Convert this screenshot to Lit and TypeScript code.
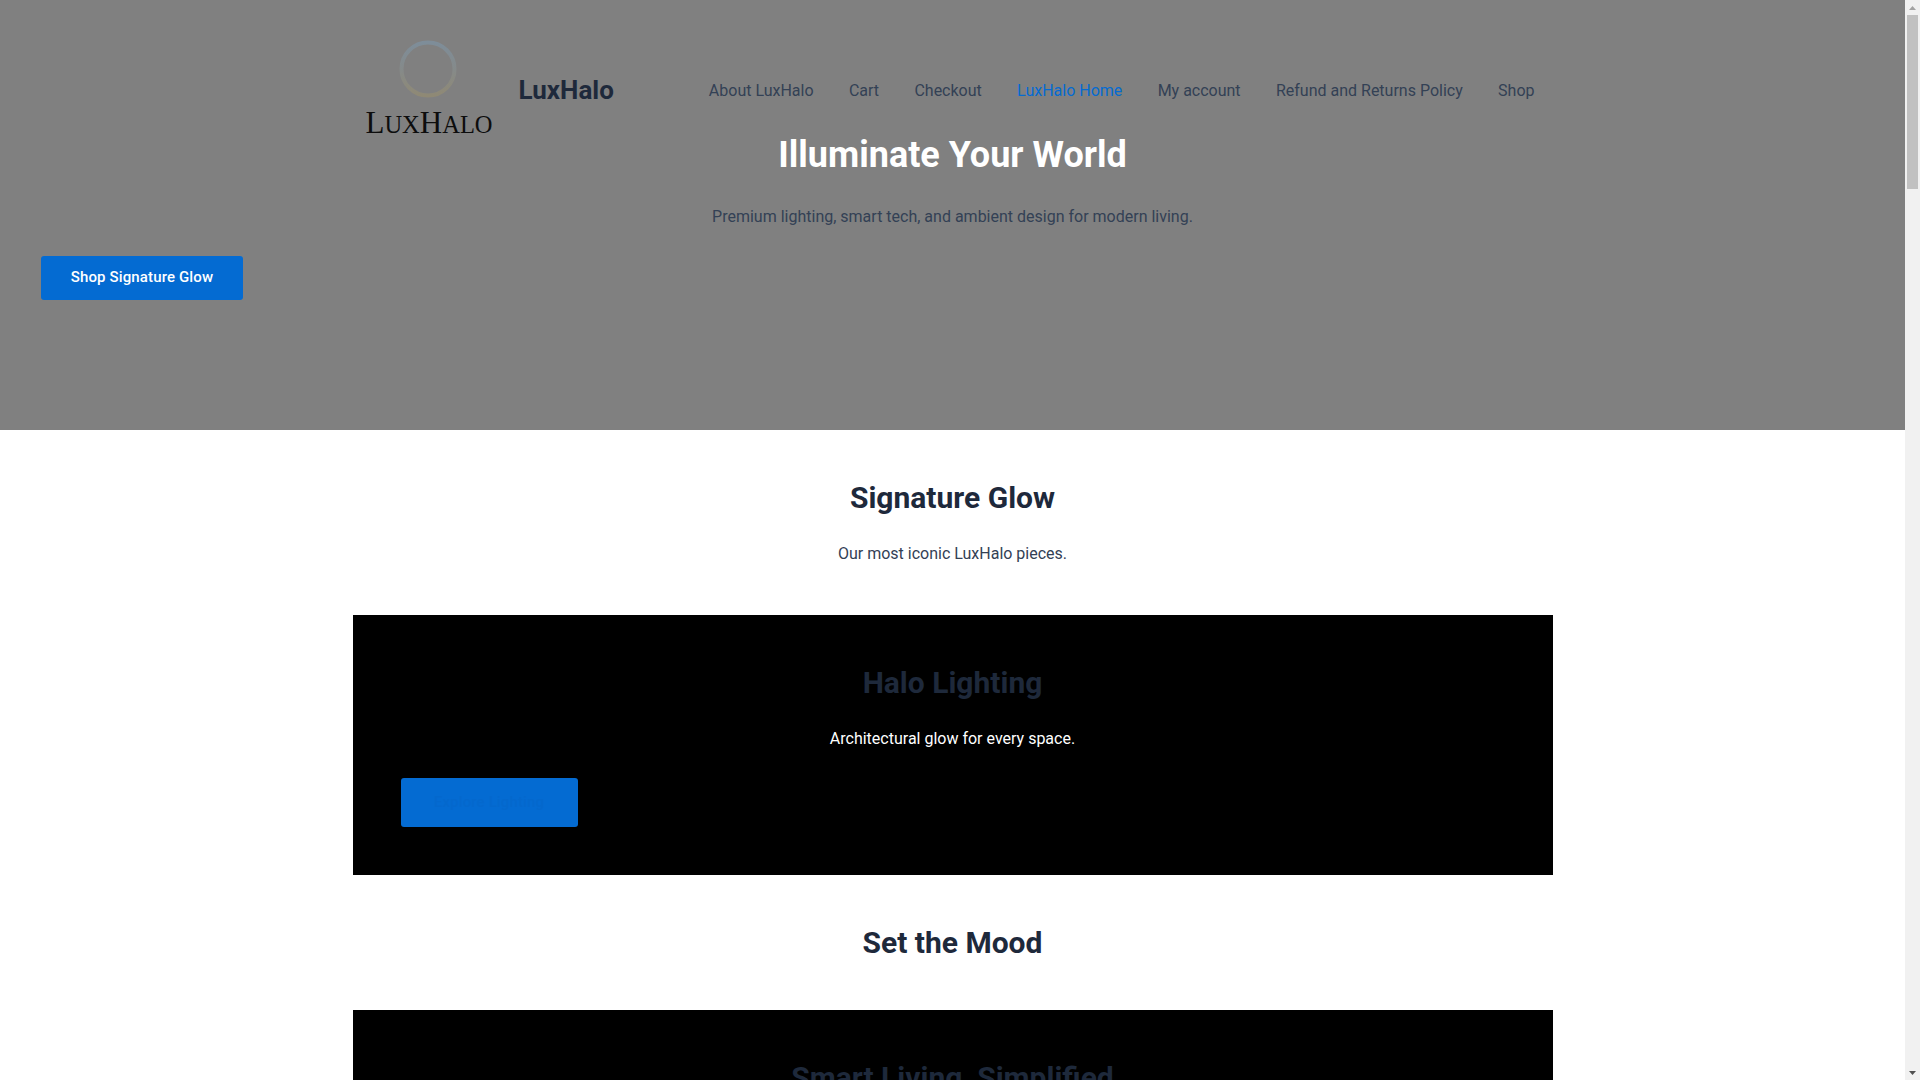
import { LitElement, html, css } from 'lit';
import { customElement } from 'lit/decorators.js';

const NAV = [
  { label: 'About LuxHalo' },
  { label: 'Cart' },
  { label: 'Checkout' },
  { label: 'LuxHalo Home', current: true },
  { label: 'My account' },
  { label: 'Refund and Returns Policy' },
  { label: 'Shop' },
];

@customElement('app-root')
export class AppRoot extends LitElement {
  static styles = css`
    :host {
      display: flex;
      height: 100vh;
      overflow: hidden;
      background: #fff;
      font-family: Roboto, 'Liberation Sans', sans-serif;
      font-size: 16px;
      color: #334155;
    }

    .page {
      flex: 1;
      min-width: 0;
      overflow: hidden;
    }

    .hero {
      height: 430px;
      background: #808080;
      overflow: hidden;
    }

    .header {
      width: 1200px;
      height: 150px;
      margin: 0 auto;
      padding: 30px 18px 0 13px;
      box-sizing: border-box;
      display: flex;
      align-items: center;
      justify-content: space-between;
    }

    .brand {
      display: flex;
      align-items: center;
      gap: 26px;
    }

    .logo {
      width: 127px;
      height: 102px;
      margin-top: 2px;
      display: flex;
      flex-direction: column;
      align-items: center;
    }

    .logo svg {
      flex: none;
      display: block;
      margin-left: -2px;
    }

    .logo-word {
      font-family: 'Liberation Serif', serif;
      font-size: 31px;
      line-height: 34px;
      color: #0d0d0d;
      white-space: nowrap;
      margin-top: 8px;
    }

    .logo-word small {
      font-size: 24.5px;
    }

    .site-title {
      font-size: 26px;
      font-weight: 700;
      color: #1e293b;
      line-height: 1;
    }

    nav {
      display: flex;
      gap: 35.33px;
      line-height: 24px;
      padding-top: 1px;
    }

    nav a {
      color: #334155;
      text-decoration: none;
    }

    nav a.current {
      color: #046bd2;
    }

    .hero-copy {
      text-align: center;
      margin-top: -18px;
    }

    .hero-copy h1 {
      margin: 0;
      font-size: 36px;
      line-height: 46px;
      font-weight: 700;
      color: #fff;
    }

    .hero-copy p {
      margin: 26px 0 0;
      line-height: 26px;
    }

    .hero-action {
      padding: 26px 0 0 41px;
    }

    .btn {
      display: inline-block;
      box-sizing: border-box;
      background: #046bd2;
      border-radius: 3px;
      font-weight: 500;
      font-size: 15px;
      letter-spacing: 0.14px;
      text-align: center;
      text-decoration: none;
    }

    .btn.hero-btn {
      width: 202px;
      height: 44px;
      line-height: 42px;
      color: #fff;
    }

    .content {
      width: 1200px;
      margin: 0 auto;
      text-align: center;
    }

    h2 {
      margin: 0;
      font-size: 30px;
      line-height: 39px;
      font-weight: 700;
      color: #1e293b;
    }

    .section-head {
      padding-top: 48px;
    }

    .section-head p {
      margin: 24px 0 0;
      line-height: 26px;
    }

    .card {
      background: #000;
      margin-top: 48px;
      padding-top: 48px;
    }

    .card p {
      margin: 24px 0 0;
      line-height: 26px;
      color: #fff;
    }

    .card-action {
      text-align: left;
      padding: 26px 0 48px 48px;
    }

    .btn.card-btn {
      width: 177px;
      height: 49px;
      line-height: 49px;
      color: #0468cd;
    }

    .scrollbar {
      flex: none;
      width: 15px;
      background: #f1f1f1;
      display: flex;
      flex-direction: column;
      align-items: center;
    }

    .arrow {
      flex: none;
      width: 15px;
      height: 15px;
      display: flex;
      align-items: center;
      justify-content: center;
    }

    .thumb {
      flex: none;
      width: 11px;
      height: 174px;
      background: #c1c1c1;
    }

    .spacer {
      flex: 1;
    }
  `;

  render() {
    return html`
      <div class="page">
        <section class="hero">
          <header class="header">
            <div class="brand">
              <div class="logo">
                <svg width="58" height="58" viewBox="0 0 58 58">
                  <defs>
                    <linearGradient id="halo" x1="0" y1="0" x2="0" y2="1">
                      <stop offset="0" stop-color="#7e8d99"></stop>
                      <stop offset="0.5" stop-color="#858a8a"></stop>
                      <stop offset="1" stop-color="#8f8975"></stop>
                    </linearGradient>
                  </defs>
                  <circle cx="29" cy="29" r="26.5" fill="none" stroke="url(#halo)" stroke-width="4"></circle>
                </svg>
                <div class="logo-word">L<small>UX</small>H<small>ALO</small></div>
              </div>
              <div class="site-title">LuxHalo</div>
            </div>
            <nav>
              ${NAV.map((item) => html`<a href="#" class=${item.current ? 'current' : ''}>${item.label}</a>`)}
            </nav>
          </header>
          <div class="hero-copy">
            <h1>Illuminate Your World</h1>
            <p>Premium lighting, smart tech, and ambient design for modern living.</p>
          </div>
          <div class="hero-action">
            <a class="btn hero-btn" href="#">Shop Signature Glow</a>
          </div>
        </section>

        <main class="content">
          <div class="section-head">
            <h2>Signature Glow</h2>
            <p>Our most iconic LuxHalo pieces.</p>
          </div>
          <article class="card">
            <h2>Halo Lighting</h2>
            <p>Architectural glow for every space.</p>
            <div class="card-action"><a class="btn card-btn" href="#">Explore Lighting</a></div>
          </article>
          <div class="section-head">
            <h2>Set the Mood</h2>
          </div>
          <article class="card">
            <h2>Smart Living, Simplified</h2>
          </article>
        </main>
      </div>
      <div class="scrollbar">
        <div class="arrow">
          <svg width="7" height="4" viewBox="0 0 7 4"><path d="M3.5 0L7 4H0z" fill="#a3a3a3"></path></svg>
        </div>
        <div class="thumb"></div>
        <div class="spacer"></div>
        <div class="arrow">
          <svg width="7" height="4" viewBox="0 0 7 4"><path d="M0 0h7L3.5 4z" fill="#505050"></path></svg>
        </div>
      </div>
    `;
  }
}
